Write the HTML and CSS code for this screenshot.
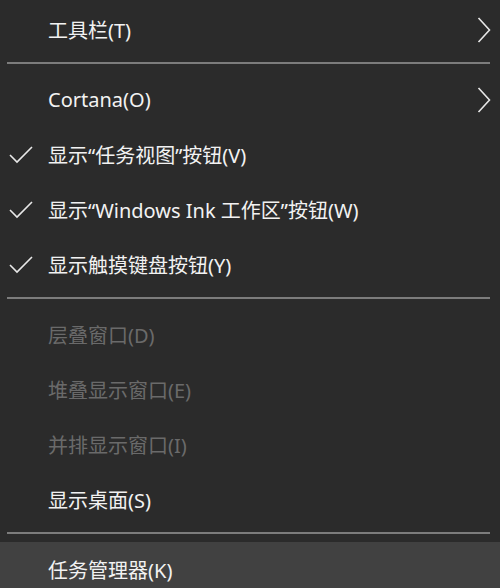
FILE: index.html
```html
<!DOCTYPE html>
<html lang="zh-CN">
<head>
    <meta charset="UTF-8">
    <title>任务栏菜单</title>
    <link rel="stylesheet" href="styles.css">
</head>
<body>
    <div class="menu">
        <div class="item">
            <span class="mark"></span>
            <span class="label">工具栏(T)</span>
            <svg class="arrow" width="14" height="26" viewBox="0 0 14 26"><polyline points="1.5,1 12.5,13 1.5,25" fill="none" stroke="#e8e8e8" stroke-width="1.6"/></svg>
        </div>
        <div class="sep"></div>
        <div class="item">
            <span class="mark"></span>
            <span class="label">Cortana(O)</span>
            <svg class="arrow" width="14" height="26" viewBox="0 0 14 26"><polyline points="1.5,1 12.5,13 1.5,25" fill="none" stroke="#e8e8e8" stroke-width="1.6"/></svg>
        </div>
        <div class="item">
            <span class="mark"><svg width="24" height="20" viewBox="0 0 24 20"><polyline points="1,10 8,17 23,2" fill="none" stroke="#e8e8e8" stroke-width="1.6"/></svg></span>
            <span class="label">显示“任务视图”按钮(V)</span>
        </div>
        <div class="item">
            <span class="mark"><svg width="24" height="20" viewBox="0 0 24 20"><polyline points="1,10 8,17 23,2" fill="none" stroke="#e8e8e8" stroke-width="1.6"/></svg></span>
            <span class="label">显示“Windows Ink 工作区”按钮(W)</span>
        </div>
        <div class="item">
            <span class="mark"><svg width="24" height="20" viewBox="0 0 24 20"><polyline points="1,10 8,17 23,2" fill="none" stroke="#e8e8e8" stroke-width="1.6"/></svg></span>
            <span class="label">显示触摸键盘按钮(Y)</span>
        </div>
        <div class="sep"></div>
        <div class="item disabled">
            <span class="mark"></span>
            <span class="label">层叠窗口(D)</span>
        </div>
        <div class="item disabled">
            <span class="mark"></span>
            <span class="label">堆叠显示窗口(E)</span>
        </div>
        <div class="item disabled">
            <span class="mark"></span>
            <span class="label">并排显示窗口(I)</span>
        </div>
        <div class="item">
            <span class="mark"></span>
            <span class="label">显示桌面(S)</span>
        </div>
        <div class="sep"></div>
        <div class="item hover">
            <span class="mark"></span>
            <span class="label">任务管理器(K)</span>
        </div>
    </div>
</body>
</html>
```

FILE: styles.css
```css
body {
    margin: 0;
    background-color: #2b2b2b;
    font-family: "Noto Sans", "Noto Sans CJK SC", sans-serif;
}
.menu {
    width: 500px;
    height: 588px;
    overflow: hidden;
    padding-top: 2px;
    box-sizing: border-box;
}
.item {
    display: flex;
    align-items: center;
    height: 55px;
    color: #f2f2f2;
    font-size: 20px;
}
.mark {
    display: flex;
    align-items: center;
    width: 48px;
    padding-left: 9px;
    box-sizing: border-box;
    flex-shrink: 0;
}
.arrow {
    margin-left: auto;
    margin-right: 9px;
}
.disabled {
    color: #6a6a6a;
}
.hover {
    background-color: #414141;
}
.sep {
    height: 2px;
    margin: 5px 10px 8px 7px;
    background-color: #7c7c7c;
}
```
